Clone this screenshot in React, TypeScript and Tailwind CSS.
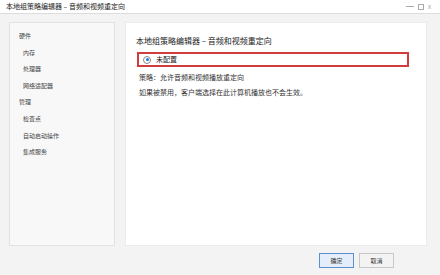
const cjk = { fontFamily: '"Noto Sans CJK SC", "Noto Sans", sans-serif' };

const navItems = [
  { label: "硬件", child: false },
  { label: "内存", child: true },
  { label: "处理器", child: true },
  { label: "网络适配器", child: true },
  { label: "管理", child: false },
  { label: "检查点", child: true },
  { label: "自动启动操作", child: true },
  { label: "集成服务", child: true },
];

export default function App() {
  return (
    <div
      className="flex h-[275px] w-[440px] flex-col overflow-hidden bg-[#f3f3f3] text-[#333]"
      style={cjk}
    >
      {/* Title bar */}
      <div className="flex h-[14px] shrink-0 items-center justify-between border-b border-[#dcdcdc] bg-white pl-[6px] pr-[9px]">
        <span className="text-[7px] leading-none text-[#222]">本地组策略编辑器 – 音频和视频重定向</span>
        <div className="flex items-center gap-[4px] text-[#999]">
          <span className="h-px w-[8px] bg-[#aaa]" />
          <span className="h-[6px] w-[6px] border border-[#aaa]" />
          <span className="text-[6px] leading-none">x</span>
        </div>
      </div>

      {/* Body */}
      <div className="flex gap-[10px] pl-[9px] pr-[13px] pt-[8px]">
        <div className="h-[224px] w-[106px] border border-[#e2e2e2] bg-[#f8f8f8] pt-[5px]">
          {navItems.map((item) => (
            <div
              key={item.label}
              className={`text-[6px] leading-[16.6px] text-[#444] ${item.child ? "pl-[13px]" : "pl-[9px]"}`}
            >
              {item.label}
            </div>
          ))}
        </div>

        <div className="h-[224px] flex-1 border border-[#ececec] bg-white pl-[10px] pt-[13px]">
          <h1 className="text-[8px] leading-[10px] text-[#222]">本地组策略编辑器 – 音频和视频重定向</h1>
          <div className="ml-[1px] mt-[6px] flex h-[15px] w-[272px] items-center gap-[5px] border-2 border-[#d23c3c] pl-[4px]">
            <span className="flex h-[8px] w-[8px] items-center justify-center rounded-full border border-[#888] bg-white">
              <span className="h-[3px] w-[3px] rounded-full bg-[#1a73d9]" />
            </span>
            <span className="text-[7px] leading-none text-[#222]">未配置</span>
          </div>
          <p className="ml-[3px] mt-[5px] text-[7px] leading-[10px]">策略：允许音频和视频播放重定向</p>
          <p className="ml-[3px] mt-[5px] text-[7px] leading-[10px]">如果被禁用，客户端选择在此计算机播放也不会生效。</p>
        </div>
      </div>

      {/* Footer buttons */}
      <div className="flex justify-end gap-[5px] pr-[46px] pt-[7px]">
        <button className="h-[15px] w-[35px] border border-[#5a8fd0] bg-[#e4eefa] text-[6px] leading-none text-[#333]">
          确定
        </button>
        <button className="h-[15px] w-[35px] border border-[#c8c8c8] bg-[#f3f3f3] text-[6px] leading-none text-[#333]">
          取消
        </button>
      </div>
    </div>
  );
}
